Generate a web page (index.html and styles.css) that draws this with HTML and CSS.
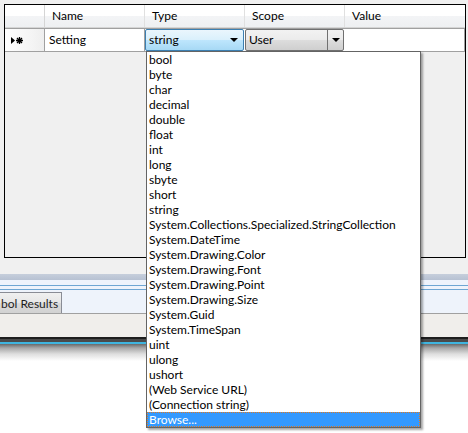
FILE: index.html
```html
<!DOCTYPE html>
<html>
<head>
<meta charset="utf-8">
<link rel="stylesheet" href="styles.css">
</head>
<body>
<div class="app">
  <div class="top">
    <div class="grid">
      <div class="hdr">
        <div class="hc corner"></div>
        <div class="hc">Name</div>
        <div class="hc">Type</div>
        <div class="hc">Scope</div>
        <div class="hc last">Value</div>
      </div>
      <div class="row">
        <div class="rowhead">
          <svg width="13" height="7" viewBox="0 0 13 7"><path d="M0 0 L4 3.5 L0 7 Z" fill="#000"/><path d="M8.5 0 V7 M5 3.5 H12 M6 1 L11 6 M11 1 L6 6" stroke="#000" stroke-width="1.3"/></svg>
        </div>
        <div class="cell name">Setting</div>
        <div class="cell combo typec"><span>string</span><i class="arr"></i></div>
        <div class="cell combo scopec"><span>User</span><b class="btn"><i class="arr"></i></b></div>
        <div class="cell value"></div>
      </div>
    </div>
  </div>
  <div class="panel">
    <div class="band"></div>
    <div class="sep"></div>
    <div class="tabstrip">
      <div class="tab">bol Results</div>
    </div>
    <div class="status"></div>
    <div class="frameedge"></div>
  </div>
  <ul class="dropdown">
    <li>bool</li>
    <li>byte</li>
    <li>char</li>
    <li>decimal</li>
    <li>double</li>
    <li>float</li>
    <li>int</li>
    <li>long</li>
    <li>sbyte</li>
    <li>short</li>
    <li>string</li>
    <li>System.Collections.Specialized.StringCollection</li>
    <li>System.DateTime</li>
    <li>System.Drawing.Color</li>
    <li>System.Drawing.Font</li>
    <li>System.Drawing.Point</li>
    <li>System.Drawing.Size</li>
    <li>System.Guid</li>
    <li>System.TimeSpan</li>
    <li>uint</li>
    <li>ulong</li>
    <li>ushort</li>
    <li>(Web Service URL)</li>
    <li>(Connection string)</li>
    <li class="sel">Browse...</li>
  </ul>
</div>
</body>
</html>
```
FILE: styles.css
```css
html, body {
  margin: 0;
  padding: 0;
  background: #ffffff;
}
body {
  width: 468px;
  height: 433px;
  overflow: hidden;
  font-family: Lato, "Open Sans", sans-serif;
  font-size: 12px;
  color: #000;
}
.app {
  position: relative;
  width: 468px;
  height: 433px;
}
.top {
  background: #f0f0f0;
  padding: 4px 2px 0 4px;
  height: 274px;
  box-sizing: border-box;
}
.grid {
  border: 1px solid #000;
  height: 254px;
  box-sizing: border-box;
  background: #f0f0f0;
}
.hdr {
  display: grid;
  grid-template-columns: 40px 100px 100px 100px 1fr;
  height: 22px;
  background: linear-gradient(#ffffff, #ffffff 50%, #f3f4f6 51%, #eef0f2);
  border-bottom: 1px solid #d5d5d5;
}
.hc {
  border-right: 1px solid #e0e0e0;
  padding-left: 7px;
  line-height: 21px;
  color: #000;
}
.hc.last { border-right: 0; }
.hc.corner { padding: 0; border-right: 1px solid #d5d5d5; }
.row {
  display: grid;
  grid-template-columns: 40px 100px 100px 100px 1fr;
  height: 24px;
  border-top: 1px solid #a0a0a0;
  border-bottom: 1px solid #a0a0a0;
  box-sizing: border-box;
  background: #fff;
}
.rowhead {
  background: linear-gradient(90deg, #ffffff, #f4f4f4 70%, #eeeeee);
  border-right: 1px solid #a0a0a0;
  display: flex;
  align-items: center;
  padding-left: 6px;
}
.cell {
  border-right: 1px solid #a0a0a0;
  line-height: 22px;
  padding-left: 4px;
  box-sizing: border-box;
}
.combo {
  display: flex;
  align-items: center;
  padding: 0;
}
.combo span { padding-left: 3px; line-height: 20px; flex: 1; }
.typec {
  border: 1px solid #3c7fb1;
  border-radius: 2px;
  background: linear-gradient(#eaf6fd, #d9f0fc 50%, #bee6fd 51%, #a7d9f5);
  margin: 0 1px 0 0;
}
.scopec {
  border: 1px solid #707070;
  border-radius: 2px;
  background: linear-gradient(#f2f2f2, #ebebeb 50%, #dddddd 51%, #cfcfcf);
  margin: 0 1px 0 0;
}
.arr {
  display: block;
  width: 0;
  height: 0;
  border-left: 4px solid transparent;
  border-right: 4px solid transparent;
  border-top: 4px solid #000;
  margin-right: 5px;
}
.btn {
  width: 15px;
  align-self: stretch;
  border-left: 1px solid #707070;
  display: flex;
  align-items: center;
  justify-content: center;
}
.btn .arr { margin: 0; }
.panel {
  background: #f0f0f0;
}
.band {
  height: 6px;
  background: linear-gradient(#c6cedb, #b7c1d2);
}
.sep {
  height: 10px;
  background: linear-gradient(#eef3fb 0, #eef3fb 5px, #6ea6d3 5px, #6ea6d3 6px, #eef3fb 6px, #eef3fb 9px, #6ea6d3 9px, #6ea6d3 10px);
}
.tabstrip {
  height: 24px;
  background: #eef3fb;
  box-sizing: border-box;
  display: flex;
  align-items: flex-end;
  border-bottom: 1px solid #a0a0a0;
}
.tab {
  height: 21px;
  min-width: 61px;
  box-sizing: border-box;
  background: linear-gradient(#f0f0f0, #e6e6e6 50%, #dadada 51%, #d2d2d2);
  border: 1px solid #898c95;
  border-left: 0;
  border-bottom: 0;
  color: #1e1e1e;
  white-space: nowrap;
  display: flex;
  justify-content: flex-end;
  align-items: center;
  padding: 0 3px 0 1px;
}
.status {
  height: 23px;
  background: #f0eeeb;
}
.frameedge {
  height: 24px;
  background: linear-gradient(#1e1e1e 0, #1e1e1e 2px, #4a4a4a 2px, #4a4a4a 5px, #3fb5df 5px, #3fb5df 7px, #6a6a6a 7px, #a8a8a8 11px, #dedede 17px, #ffffff 24px);
}
.dropdown {
  position: absolute;
  left: 146px;
  top: 51px;
  width: 275px;
  height: 377px;
  box-sizing: border-box;
  margin: 0;
  padding: 0;
  list-style: none;
  background: #fff;
  border: 1px solid #646464;
  box-shadow: 2px 2px 2px rgba(0,0,0,0.35);
}
.dropdown li {
  height: 15px;
  line-height: 15px;
  padding-left: 2px;
  white-space: nowrap;
}
.dropdown li.sel {
  background: #3399ff;
  color: #fff;
  outline: 1px dotted #e07a20;
  outline-offset: -1px;
}
```
